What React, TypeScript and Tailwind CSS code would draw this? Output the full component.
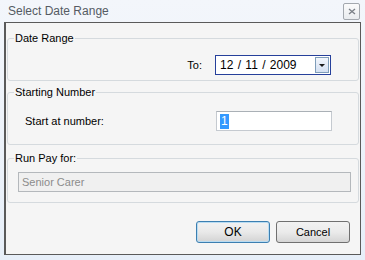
export default function App() {
  return (
    <div className="w-[365px] h-[260px] overflow-hidden bg-gradient-to-b from-[#f3f6fb] to-[#e7eff9] font-['Liberation_Sans',Arial,sans-serif] text-[11px] text-black">
      {/* Title bar */}
      <div className="flex h-[22px] items-start justify-between pl-[8px] pr-[5px]">
        <span className="pt-[4px] text-[12px] leading-[14px] text-[#555b63]">Select Date Range</span>
        <button className="mt-[3px] flex h-[17px] w-[17px] items-center justify-center rounded-[2px] border border-[#a3a8ae] bg-gradient-to-b from-[#fbfbfb] to-[#e9ecef]">
          <svg width="8" height="7" viewBox="0 0 8 7">
            <path d="M1 1 L7 6 M7 1 L1 6" stroke="#7a7f86" strokeWidth="1.3" />
          </svg>
        </button>
      </div>

      {/* Client area */}
      <div className="ml-[4px] h-[233px] w-[357px] border border-l-2 border-[#5a5a5a] bg-[#f5f5f5] px-[1px]">
        {/* Date Range */}
        <fieldset className="mt-[8px] rounded-[3px] border border-[#d5dade] px-0">
          <legend className="ml-[6px] px-[1px] leading-[14px]">Date Range</legend>
          <div className="flex items-center justify-end gap-[13px] pb-[5px] pr-[27px] pt-[10px]">
            <span>To:</span>
            <div className="flex h-[20px] w-[116px] items-center border border-[#26409b] bg-white">
              <span className="flex-1 pl-[4px] text-[12px] leading-[14px] [word-spacing:1px]">12 / 11 / 2009</span>
              <div className="mr-[1px] flex h-[16px] w-[14px] items-center justify-center border border-[#7f9db9] bg-gradient-to-b from-[#f2f6fc] to-[#d4e0f2]">
                <svg width="6" height="3" viewBox="0 0 6 3">
                  <path d="M0 0 H6 L3 3 Z" fill="#1a1a1a" />
                </svg>
              </div>
            </div>
          </div>
        </fieldset>

        {/* Starting Number */}
        <fieldset className="mt-[4px] rounded-[3px] border border-[#d5dade] px-0">
          <legend className="ml-[6px] px-[1px] leading-[14px]">Starting Number</legend>
          <div className="flex items-center justify-between pb-[13px] pl-[17px] pr-[26px] pt-[12px]">
            <span>Start at number:</span>
            <div className="flex h-[20px] w-[116px] items-center border border-[#c5cad0] border-t-[#aab0b6] bg-white pl-[3px]">
              <span className="bg-[#3399ff] px-[1px] text-[12px] leading-[15px] text-white">1</span>
            </div>
          </div>
        </fieldset>

        {/* Run Pay for */}
        <fieldset className="mt-[6px] rounded-[3px] border border-[#d5dade] px-0">
          <legend className="ml-[6px] px-[1px] leading-[14px]">Run Pay for:</legend>
          <div className="pb-[10px] pl-[10px] pr-[7px] pt-[7px]">
            <div className="flex h-[20px] items-center border border-[#b4b8bc] bg-[#f0f0f0] pl-[3px] text-[#8c8c8c]">
              Senior Carer
            </div>
          </div>
        </fieldset>

        {/* Buttons */}
        <div className="mt-[18px] flex justify-end gap-[6px] pr-[9px]">
          <button className="h-[22px] w-[74px] rounded-[3px] border border-[#3c7fb1] bg-gradient-to-b from-[#f2f2f2] via-[#e9e9e9] to-[#d3d3d3] text-[12px] leading-[14px] shadow-[inset_0_0_0_1px_#b9dcf2]">
            OK
          </button>
          <button className="h-[22px] w-[74px] rounded-[3px] border border-[#707070] bg-gradient-to-b from-[#f2f2f2] via-[#ebebeb] to-[#d5d5d5] leading-[14px]">
            Cancel
          </button>
        </div>
      </div>
    </div>
  );
}
